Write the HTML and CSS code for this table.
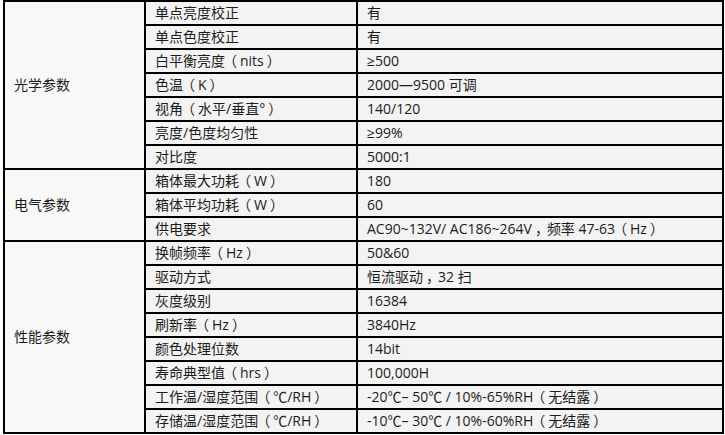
FILE: index.html
```html
<!DOCTYPE html>
<html lang="zh-CN">
<head>
<meta charset="utf-8">
<title>参数表</title>
<link rel="stylesheet" href="styles.css">
</head>
<body>
<table class="spec">
  <colgroup>
    <col class="c-group">
    <col class="c-name">
    <col class="c-value">
  </colgroup>
  <tbody>
    <tr><td class="group" rowspan="7">光学参数</td><td>单点亮度校正</td><td>有</td></tr>
    <tr><td>单点色度校正</td><td>有</td></tr>
    <tr><td>白平衡亮度<span class="po">（</span>nits<span class="pc">）</span></td><td>≥500</td></tr>
    <tr><td>色温<span class="po">（</span>K<span class="pc">）</span></td><td>2000—9500 可调</td></tr>
    <tr><td>视角<span class="po">（</span>水平/垂直°<span class="pc">）</span></td><td>140/120</td></tr>
    <tr><td>亮度/色度均匀性</td><td>≥99%</td></tr>
    <tr><td>对比度</td><td>5000:1</td></tr>
    <tr><td class="group" rowspan="3">电气参数</td><td>箱体最大功耗<span class="po">（</span>W<span class="pc">）</span></td><td>180</td></tr>
    <tr><td>箱体平均功耗<span class="po">（</span>W<span class="pc">）</span></td><td>60</td></tr>
    <tr><td>供电要求</td><td>AC90~132V/ AC186~264V<span class="cm">，</span>频率 47-63<span class="po">（</span>Hz<span class="pc">）</span></td></tr>
    <tr><td class="group" rowspan="8">性能参数</td><td>换帧频率<span class="po">（</span>Hz<span class="pc">）</span></td><td>50&amp;60</td></tr>
    <tr><td>驱动方式</td><td>恒流驱动<span class="cm">，</span>32 扫</td></tr>
    <tr><td>灰度级别</td><td>16384</td></tr>
    <tr><td>刷新率<span class="po">（</span>Hz<span class="pc">）</span></td><td>3840Hz</td></tr>
    <tr><td>颜色处理位数</td><td>14bit</td></tr>
    <tr><td>寿命典型值<span class="po">（</span>hrs<span class="pc">）</span></td><td>100,000H</td></tr>
    <tr><td>工作温/湿度范围<span class="po">（</span>℃/RH<span class="pc">）</span></td><td>-20℃– 50℃ / 10%-65%RH<span class="po">（</span>无结露<span class="pc">）</span></td></tr>
    <tr><td>存储温/湿度范围<span class="po">（</span>℃/RH<span class="pc">）</span></td><td>-10℃– 30℃ / 10%-60%RH<span class="po">（</span>无结露<span class="pc">）</span></td></tr>
  </tbody>
</table>
</body>
</html>
```
FILE: styles.css
```css
html, body {
  margin: 0;
  padding: 0;
  background: #ffffff;
}

body {
  padding-left: 3px;
  font-family: "Open Sans", "Noto Sans CJK SC", sans-serif;
  font-size: 14px;
  color: #1c1c1c;
}

.spec {
  border-collapse: collapse;
  table-layout: fixed;
  width: 721px;
  background: #f2f3f2;
}

.c-group { width: 141px; }
.c-name { width: 212px; }
.c-value { width: 366px; }

.spec tr {
  height: 24px;
}

.spec td {
  border: 2px solid #000000;
  padding: 0 0 0 9px;
  line-height: 20px;
  vertical-align: middle;
  white-space: nowrap;
  overflow: hidden;
}

.spec td.group {
  background: #f8f8f8;
  padding-left: 9px;
}

/* full-width brackets drawn centred, as in the source document */
.po,
.pc,
.cm {
  font-feature-settings: "halt";
}

.po {
  padding: 0 3px 0 5px;
}

.pc {
  padding: 0 5px 0 3px;
}

.cm {
  padding: 0 5px 0 3px;
}
```
